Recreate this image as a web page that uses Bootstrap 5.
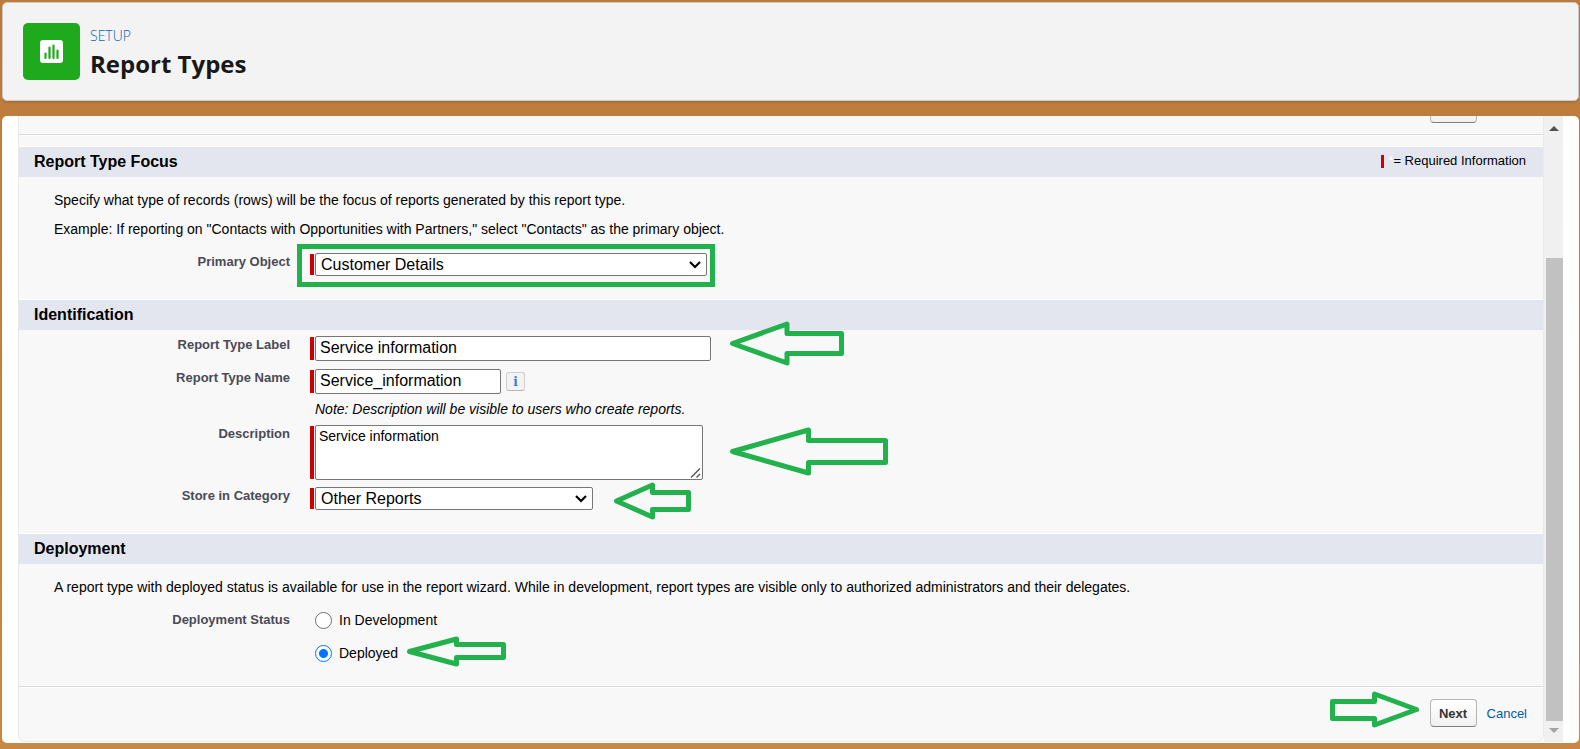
<!DOCTYPE html>
<html lang="en">
<head>
<meta charset="utf-8">
<meta name="viewport" content="width=device-width, initial-scale=1">
<title>Report Types</title>
<link href="https://cdn.jsdelivr.net/npm/bootstrap@5.3.0/dist/css/bootstrap.min.css" rel="stylesheet">
<style>
  body {
    font: 14px/19px "Liberation Sans", Arial, sans-serif;
    color: #000;
    background: linear-gradient(#bc7b3a, #c98745);
    padding: 2px 1px 6px 2px;
  }
  .setup-header {
    background: #f3f3f3;
    border: 1px solid #c9c9c9;
    border-radius: 5px;
    padding: 20px 20px 18px;
    margin-bottom: 15px;
    gap: 10px;
    box-shadow: 0 2px 2px rgba(0, 0, 0, .1);
    font-family: "Open Sans", sans-serif;
  }
  .setup-icon { width: 57px; height: 57px; border-radius: 5px; background: #1fa91c; }
  .setup-kicker { font-size: 14px; line-height: 20px; color: #0b66a8; font-weight: 300; padding-top: 3px; }
  .setup-title { font-size: 24px; line-height: 36px; font-weight: 700; color: #181818; }
  .panel { background: #fff; border-radius: 5px; padding: 0 16px 1px; }
  .sheet { background: #f8f8f8; border: solid #eaeaea; border-width: 0 1px 1px; border-radius: 0 0 7px 7px; }
  .top-bar { height: 18px; overflow: hidden; padding: 0 66px 11px 0; }
  .rule { height: 2px; background: #dbdbdb; border-bottom: 1px solid #fff; }
  .rule.top-rule { margin-bottom: 10px; }
  .band {
    background: #e3e6ef;
    border-top: 1px solid #fff;
    height: 31px;
    padding: 0 17px 0 15px;
  }
  .band h2 { font-size: 16px; line-height: 20px; font-weight: 700; }
  .legend-text { font-size: 13px; line-height: 16px; padding-bottom: 2px; }
  .legend-bar { width: 3px; height: 13px; background: #c00; }
  .star { color: #fff; width: 9px; padding-left: 4px; font-size: 12px; }
  .section-body { padding: 14px 0 23px; }
  .section-body.compact { padding-top: 6px; }
  .section-body.last { padding-bottom: 24px; }
  .section-body p { margin: 0 35px 10px; }
  .section-body p:last-of-type { margin-bottom: 14px; }
  .field { display: flex; align-items: flex-start; margin-bottom: 8px; }
  .note + .field { margin-bottom: 7px; }
  .field:last-child { margin-bottom: 0; }
  .field-name { width: 271px; flex: none; text-align: right; font-size: 13px; line-height: 18px; font-weight: 700; color: #4a4a56; margin-right: 20px; }
  .control { display: flex; position: relative; padding-left: 5px; }
  .control.required::before { content: ""; position: absolute; left: 0; top: 1px; bottom: 1px; width: 4px; background: #c00; }
  .box { border: 1px solid #767676; border-radius: 2px; background-color: #fff; color: #000; font-size: 16px; line-height: 20px; display: block; }
  input.box { height: 25px; padding: 0 4px 2px; }
  select.box {
    height: 23px;
    padding: 0 5px;
    appearance: none;
    background: #fff url("data:image/svg+xml,%3Csvg xmlns='http://www.w3.org/2000/svg' width='12' height='8'%3E%3Cpath d='M1 1l5 5 5-5' fill='none' stroke='%23000' stroke-width='2.2'/%3E%3C/svg%3E") no-repeat right 5px center;
  }
  textarea.box { font-size: 14px; line-height: 16px; height: 55px; padding: 2px 3px; resize: both; }
  textarea.box::-webkit-resizer {
    background: url("data:image/svg+xml,%3Csvg xmlns='http://www.w3.org/2000/svg' width='12' height='12'%3E%3Cpath d='M1 10.500L10 1.500M6.500 10.500L10 7' fill='none' stroke='%23555' stroke-width='1.4'/%3E%3C/svg%3E") no-repeat right bottom;
  }
  .w-label { width: 396px; }
  .w-name { width: 186px; }
  .w-object { width: 392px; }
  .w-category { width: 278px; }
  .w-description { width: 388px; }
  .info { width: 19px; height: 19px; margin: 3px 0 0 5px; padding: 0; border: 1px solid #cfcfd2; border-bottom-color: #b5b5b8; border-radius: 3px; background: #f3f3f6; color: #2f7de0; font: bold 12px/16px "DejaVu Serif", serif; }
  .note { margin: -2px 0 7px 296px; line-height: 18px; font-style: italic; }
  .highlight { position: absolute; inset: -9px -8px -11px -13px; border: 5px solid #22b14c; pointer-events: none; }
  .arrow { position: absolute; overflow: visible; fill: none; stroke: #22b14c; stroke-width: 5; stroke-linejoin: round; pointer-events: none; }
  .a-label { left: 420px; top: -15px; }
  .a-description { left: 420px; top: 2px; }
  .a-category { left: 304px; top: -5px; }
  .a-deployed { left: 92px; top: -8px; }
  .a-next { right: 58px; top: -8px; }
  .choice { line-height: 18px; gap: 7px; }
  .choice input { appearance: none; width: 17px; height: 17px; margin: 1px 0 0; border: 1px solid #707070; border-radius: 50%; background: #fff; }
  .choice input:checked { border-color: #0075ff; background: radial-gradient(#0075ff 0 4px, #fff 5px); }
  .choices { gap: 15px; }
  .sf-btn { width: 47px; height: 28px; padding: 0; border: 1px solid #b5b5b5; border-bottom-color: #7f7f7f; border-radius: 4px; background: linear-gradient(#fff, #f1f1f1); font-size: 13px; font-weight: 700; color: #333; flex: none; }
  .footer-bar { padding: 11px 16px 14px; gap: 10px; }
  .footer-bar a { color: #015ba7; font-size: 13px; text-decoration: none; }
  .scroll-track { width: 19px; background: #f0f0f0; padding: 10px 0 8px 2px; }
  .scroll-track svg { margin-left: 3px; display: block; }
  .scroll-thumb { background: #c1c1c1; margin: 126px 0 7px; }
</style>
</head>
<body class="d-flex flex-column min-vh-100">

<header class="setup-header d-flex">
  <div class="setup-icon d-flex align-items-center justify-content-center">
    <svg width="23" height="23" viewBox="0 0 23 23" aria-hidden="true">
      <rect width="23" height="23" rx="3" fill="#fff"/>
      <path d="M5.500 13.500v4.500M9.500 7.500V18M13.500 5.500V18M17.500 10.500V18" stroke="#1fa91c" stroke-width="2.200" stroke-linecap="round"/>
    </svg>
  </div>
  <div>
    <div class="setup-kicker">SETUP</div>
    <h1 class="setup-title m-0">Report Types</h1>
  </div>
</header>

<main class="panel d-flex flex-grow-1">
  <form class="sheet flex-grow-1">
    <div class="top-bar d-flex justify-content-end align-items-end">
      <button type="button" class="sf-btn" aria-label="Next"></button>
    </div>
    <div class="rule top-rule"></div>

    <section>
      <div class="band d-flex align-items-center justify-content-between">
        <h2 class="m-0">Report Type Focus</h2>
        <div class="legend-text d-flex align-items-center">
          <span class="legend-bar"></span><span class="star">*</span>= Required Information
        </div>
      </div>
      <div class="section-body">
        <p>Specify what type of records (rows) will be the focus of reports generated by this report type.</p>
        <p>Example: If reporting on "Contacts with Opportunities with Partners," select "Contacts" as the primary object.</p>
        <div class="field">
          <label class="field-name" for="object">Primary Object</label>
          <div class="control required">
            <select id="object" class="box w-object"><option>Customer Details</option></select>
            <span class="highlight"></span>
          </div>
        </div>
      </div>
    </section>

    <section>
      <div class="band d-flex align-items-center"><h2 class="m-0">Identification</h2></div>
      <div class="section-body compact">
        <div class="field">
          <label class="field-name" for="label">Report Type Label</label>
          <div class="control required">
            <input id="label" type="text" class="box w-label" value="Service information">
            <svg class="arrow a-label" width="114" height="45" aria-hidden="true"><path d="M2.500 22.500L57 3v9.500h54.500v20H57v9.500z"/></svg>
          </div>
        </div>
        <div class="field">
          <label class="field-name" for="name">Report Type Name</label>
          <div class="control required">
            <input id="name" type="text" class="box w-name" value="Service_information">
            <button type="button" class="info" aria-label="Information">i</button>
          </div>
        </div>
        <div class="note">Note: Description will be visible to users who create reports.</div>
        <div class="field">
          <label class="field-name" for="description">Description</label>
          <div class="control required">
            <textarea id="description" class="box w-description">Service information</textarea>
            <svg class="arrow a-description" width="158" height="49" aria-hidden="true"><path d="M2.500 24.500L78.500 3v10.500h77v22h-77V46z"/></svg>
          </div>
        </div>
        <div class="field">
          <label class="field-name" for="category">Store in Category</label>
          <div class="control required">
            <select id="category" class="box w-category"><option>Other Reports</option></select>
            <svg class="arrow a-category" width="77" height="38" aria-hidden="true"><path d="M2.500 19L38.500 3v7.500h36v17h-36V35z"/></svg>
          </div>
        </div>
      </div>
    </section>

    <section>
      <div class="band d-flex align-items-center"><h2 class="m-0">Deployment</h2></div>
      <div class="section-body last">
        <p>A report type with deployed status is available for use in the report wizard. While in development, report types are visible only to authorized administrators and their delegates.</p>
        <div class="field" role="radiogroup" aria-labelledby="status">
          <span class="field-name" id="status">Deployment Status</span>
          <div class="control choices flex-column">
            <label class="choice d-flex"><input type="radio" name="status">In Development</label>
            <div class="position-relative">
              <label class="choice d-flex"><input type="radio" name="status" checked>Deployed</label>
              <svg class="arrow a-deployed" width="99" height="31" aria-hidden="true"><path d="M2.500 15.500L49.500 3v5.500h47v13h-47V28z"/></svg>
            </div>
          </div>
        </div>
      </div>
    </section>

    <div class="rule"></div>
    <div class="footer-bar d-flex justify-content-end align-items-center">
      <div class="position-relative">
        <svg class="arrow a-next" width="89" height="37" aria-hidden="true"><path d="M86.500 18.500L44.500 3v7.500h-42v17h42V34z"/></svg>
        <button type="submit" class="sf-btn d-block">Next</button>
      </div>
      <a href="#">Cancel</a>
    </div>
  </form>

  <div class="scroll-track d-flex flex-column" aria-hidden="true">
    <svg width="11" height="6"><path d="M0 5L5 0l5 5z" fill="#505050"/></svg>
    <div class="scroll-thumb flex-grow-1"></div>
    <svg width="11" height="6"><path d="M0 0h10L5 5z" fill="#a3a3a3"/></svg>
  </div>
</main>

<script src="https://cdn.jsdelivr.net/npm/bootstrap@5.3.0/dist/js/bootstrap.bundle.min.js"></script>
</body>
</html>
